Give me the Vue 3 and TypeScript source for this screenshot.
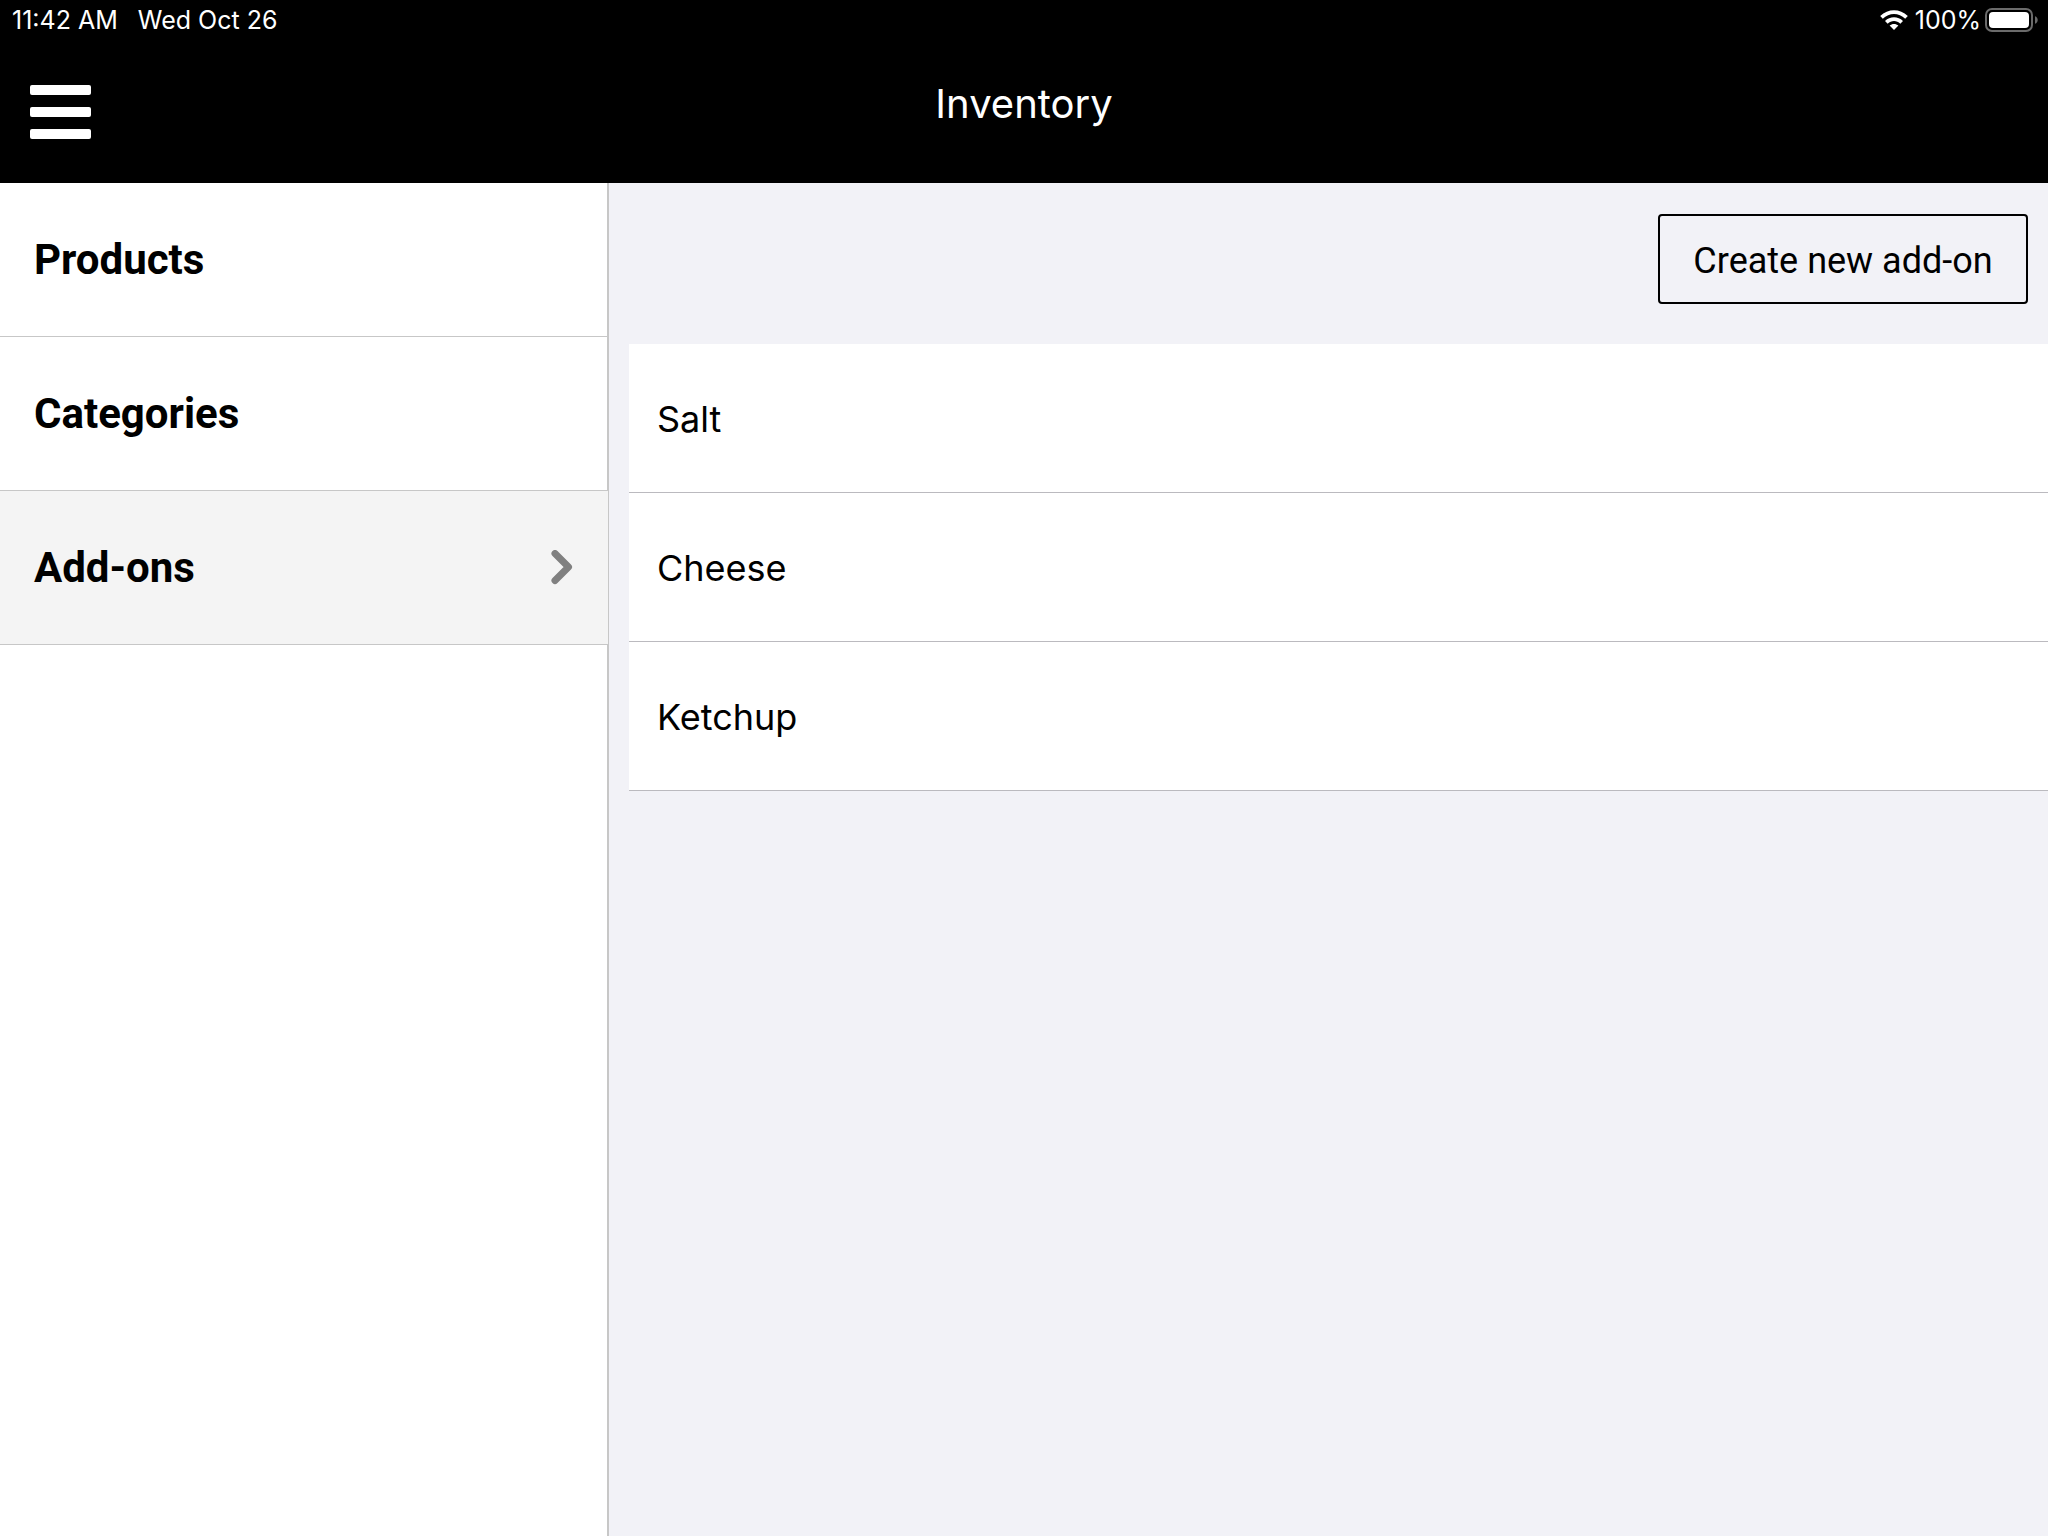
<script setup lang="ts">
import { ref } from 'vue'

interface Section {
  id: string
  label: string
}

const sections: Section[] = [
  { id: 'products', label: 'Products' },
  { id: 'categories', label: 'Categories' },
  { id: 'add-ons', label: 'Add-ons' },
]
const active = ref('add-ons')
const addOns: string[] = ['Salt', 'Cheese', 'Ketchup']
</script>

<template>
  <div class="app">
    <header class="top">
      <div class="status">
        <div class="status-group when">
          <span>11:42 AM</span>
          <span>Wed Oct 26</span>
        </div>
        <div class="status-group">
          <svg class="wifi" width="28" height="20" viewBox="0 0 28 20" aria-hidden="true">
            <path d="M0.2 6.1C8-1.8 20-1.8 27.8 6.1L25.2 8.8C18.8 2.4 9.2 2.4 2.8 8.8Z" />
            <path d="M5 11C10 6 18 6 23 11L20.3 13.7C16.8 10.2 11.2 10.2 7.7 13.7Z" />
            <path d="M9.6 15.6C12.2 13.3 15.8 13.3 18.4 15.6L14 20Z" />
          </svg>
          <span class="percent">100%</span>
          <svg width="54" height="24" viewBox="0 0 54 24" aria-hidden="true">
            <rect x="1" y="1" width="46" height="22" rx="6" fill="none" stroke="#6b6b6b" stroke-width="2" />
            <rect x="4" y="4" width="40" height="16" rx="4" fill="#fff" />
            <path d="M50 8.2C53.6 9.4 53.6 14.6 50 15.8Z" fill="#6b6b6b" />
          </svg>
        </div>
      </div>
      <div class="bar">
        <button class="menu" type="button" aria-label="Menu">
          <span></span><span></span><span></span>
        </button>
        <h1>Inventory</h1>
      </div>
    </header>

    <div class="body">
      <nav class="side">
        <button
          v-for="s in sections"
          :key="s.id"
          type="button"
          class="section"
          :class="{ active: s.id === active }"
          @click="active = s.id"
        >
          <span>{{ s.label }}</span>
          <svg v-if="s.id === active" width="22" height="36" viewBox="0 0 22 36" aria-hidden="true">
            <path d="M4 3.5L17.5 17L4 30.5" fill="none" stroke="#808080" stroke-width="7" stroke-linecap="round" stroke-linejoin="round" />
          </svg>
        </button>
      </nav>

      <main class="content">
        <div class="actions">
          <button class="create" type="button">Create new add-on</button>
        </div>
        <ul class="list">
          <li v-for="a in addOns" :key="a">{{ a }}</li>
        </ul>
      </main>
    </div>
  </div>
</template>

<style>
body {
  margin: 0;
}
</style>

<style scoped>
.app {
  display: flex;
  flex-direction: column;
  min-height: 100vh;
  background: #f2f2f7;
  color: #000;
  font-family: Inter, "Liberation Sans", sans-serif;
}
.top {
  background: #000;
  color: #fff;
}
.status {
  display: flex;
  justify-content: space-between;
  align-items: center;
  height: 40px;
  padding: 0 9px 0 12px;
  font-size: 25px;
  line-height: 30px;
  font-weight: 400;
}
.status-group {
  display: flex;
  align-items: center;
}
.when {
  gap: 20px;
}
.wifi {
  fill: #fff;
}
.percent {
  margin: 0 4px 0 7px;
}
.bar {
  display: grid;
  grid-template-columns: 1fr auto 1fr;
  height: 143px;
}
.menu {
  display: flex;
  flex-direction: column;
  justify-self: start;
  align-self: start;
  gap: 12px;
  margin: 45px 0 0 30px;
  padding: 0;
  border: 0;
  background: none;
}
.menu span {
  width: 61px;
  height: 10px;
  border-radius: 2px;
  background: #fff;
}
h1 {
  margin: 36px 0 0;
  font-size: 40px;
  line-height: 56px;
  font-weight: 400;
}
.body {
  display: flex;
  flex: 1;
}
.side {
  box-sizing: border-box;
  flex: none;
  width: 609px;
  background: linear-gradient(#c7c7c7, #c7c7c7) right / 2px 100% no-repeat #fff;
}
.section {
  display: flex;
  align-items: center;
  justify-content: space-between;
  box-sizing: border-box;
  width: calc(100% - 2px);
  height: 154px;
  padding: 0 35px 0 34px;
  border: 0;
  border-bottom: 1px solid #c7c7c7;
  background: #fff;
  color: #000;
  font: 700 42px/56px Roboto, sans-serif;
  text-align: left;
}
.section.active {
  width: calc(100% - 1px);
  background: #f4f4f4;
}
.content {
  flex: 1;
  min-width: 0;
  padding-left: 20px;
}
.actions {
  display: flex;
  justify-content: flex-end;
  padding: 31px 20px 40px;
}
.create {
  box-sizing: border-box;
  height: 90px;
  min-width: 370px;
  padding: 4px 32px 0;
  border: 2px solid #000;
  border-radius: 4px;
  background: transparent;
  color: #000;
  font: 400 36px/48px Roboto, sans-serif;
}
.list {
  margin: 0;
  padding: 0;
  list-style: none;
}
.list li {
  box-sizing: border-box;
  height: 149px;
  padding: 0 28px;
  border-bottom: 1px solid #bbbabf;
  background: #fff;
  font-size: 36px;
  line-height: 150px;
}
</style>
